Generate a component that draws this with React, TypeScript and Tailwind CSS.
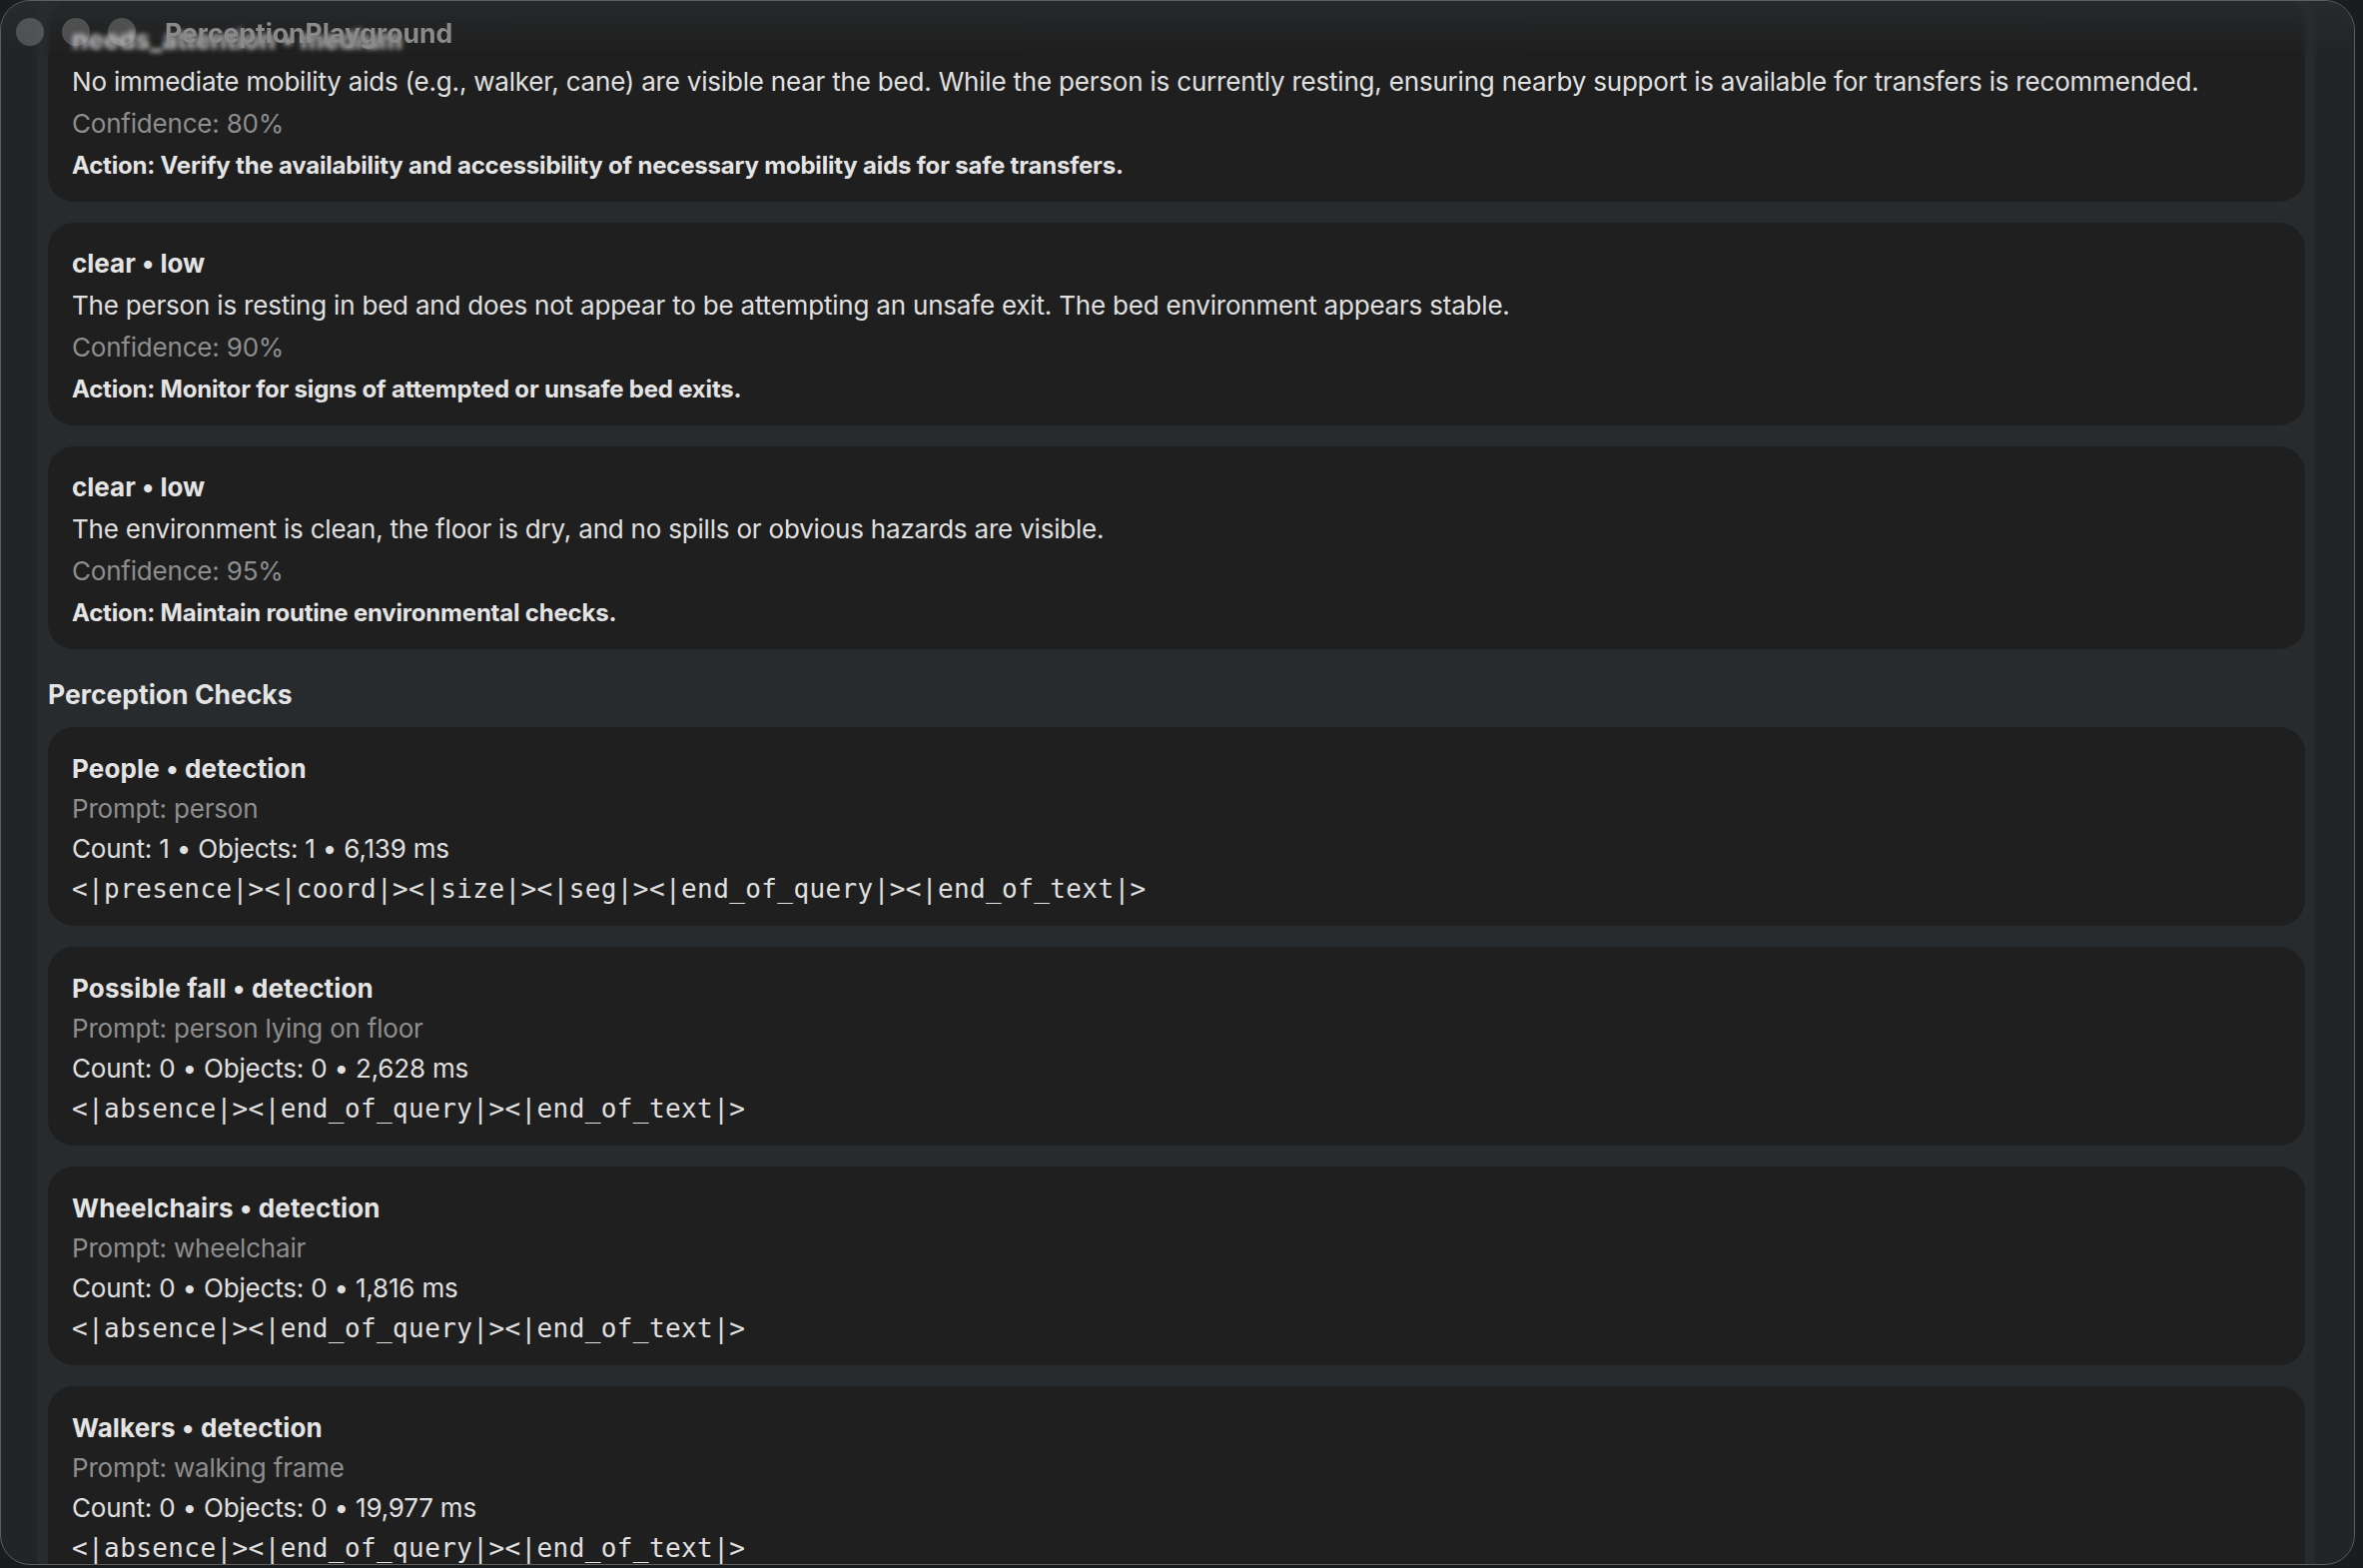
import React from "react";

type Finding = {
  title: string;
  detail: string;
  confidence: string;
  action: string;
};

type Check = {
  title: string;
  prompt: string;
  stats: string;
  tokens: string;
};

const findings: Finding[] = [
  {
    title: "needs_attention • medium",
    detail:
      "No immediate mobility aids (e.g., walker, cane) are visible near the bed. While the person is currently resting, ensuring nearby support is available for transfers is recommended.",
    confidence: "Confidence: 80%",
    action: "Action: Verify the availability and accessibility of necessary mobility aids for safe transfers.",
  },
  {
    title: "clear • low",
    detail:
      "The person is resting in bed and does not appear to be attempting an unsafe exit. The bed environment appears stable.",
    confidence: "Confidence: 90%",
    action: "Action: Monitor for signs of attempted or unsafe bed exits.",
  },
  {
    title: "clear • low",
    detail: "The environment is clean, the floor is dry, and no spills or obvious hazards are visible.",
    confidence: "Confidence: 95%",
    action: "Action: Maintain routine environmental checks.",
  },
];

const checks: Check[] = [
  {
    title: "People • detection",
    prompt: "Prompt: person",
    stats: "Count: 1 • Objects: 1 • 6,139 ms",
    tokens: "<|presence|><|coord|><|size|><|seg|><|end_of_query|><|end_of_text|>",
  },
  {
    title: "Possible fall • detection",
    prompt: "Prompt: person lying on floor",
    stats: "Count: 0 • Objects: 0 • 2,628 ms",
    tokens: "<|absence|><|end_of_query|><|end_of_text|>",
  },
  {
    title: "Wheelchairs • detection",
    prompt: "Prompt: wheelchair",
    stats: "Count: 0 • Objects: 0 • 1,816 ms",
    tokens: "<|absence|><|end_of_query|><|end_of_text|>",
  },
  {
    title: "Walkers • detection",
    prompt: "Prompt: walking frame",
    stats: "Count: 0 • Objects: 0 • 19,977 ms",
    tokens: "<|absence|><|end_of_query|><|end_of_text|>",
  },
];

function FindingCard({ f }: { f: Finding }) {
  return (
    <div className="flex flex-col gap-[10px] rounded-[26px] bg-[#1f1f1f] pt-[25px] pb-[20px] px-6">
      <div className="text-[26px] leading-[32px] font-bold tracking-normal text-[#e4e4e4]">{f.title}</div>
      <div className="text-[26px] leading-[32px] text-[#e0e0e0]">{f.detail}</div>
      <div className="text-[26px] leading-[32px] text-[#8e8e8e]">{f.confidence}</div>
      <div className="text-[24px] leading-[32px] font-bold tracking-[-0.2px] text-[#e4e4e4]">{f.action}</div>
    </div>
  );
}

function CheckCard({ c }: { c: Check }) {
  return (
    <div className="flex flex-col gap-2 rounded-[26px] bg-[#1f1f1f] pt-[26px] pb-[21px] px-6">
      <div className="text-[26px] leading-[32px] font-bold tracking-[0.15px] text-[#e4e4e4]">{c.title}</div>
      <div className="text-[26px] leading-[32px] text-[#8e8e8e]">{c.prompt}</div>
      <div className="text-[26px] leading-[32px] tracking-[-0.2px] text-[#e0e0e0]">{c.stats}</div>
      <div className="font-['DejaVu_Sans_Mono',monospace] text-[26px] leading-[32px] tracking-[0.4px] text-[#e0e0e0]">
        {c.tokens}
      </div>
    </div>
  );
}

export default function App() {
  return (
    <div className="relative h-[1570px] w-[2366px] overflow-hidden bg-[#1b1c1e] font-['Inter','Liberation_Sans',sans-serif] tracking-[-0.2px]">
      {/* window */}
      <div className="absolute left-0 top-0 flex h-[1567px] w-[2358px] overflow-hidden rounded-[30px] border border-[#5e5e5e] bg-[#222527]">
        <div className="w-[36px] shrink-0" />
        <main className="flex-1 overflow-hidden bg-[#272b2d] pl-[11px] pr-[10px]">
          <div className="-mt-[2px] flex flex-col gap-[21px]">
            {findings.map((f, i) => (
              <FindingCard key={i} f={f} />
            ))}
          </div>
          <div className="mt-[29px] text-[26.5px] leading-[32px] font-bold tracking-normal text-[#e4e4e4]">
            Perception Checks
          </div>
          <div className="mt-[17px] flex flex-col gap-[21px]">
            {checks.map((c, i) => (
              <CheckCard key={i} c={c} />
            ))}
          </div>
        </main>
        <div className="w-[39px] shrink-0" />

        {/* title bar */}
        <div className="absolute left-0 right-0 top-0 flex h-[56px] items-start bg-gradient-to-b from-[#2a2d2f]/70 to-[#2a2d2f]/0 backdrop-blur-[2.5px]">
          <div className="ml-[15px] mt-[17px] flex gap-[18px]">
            <span className="h-[28px] w-[28px] rounded-full bg-white/20" />
            <span className="h-[28px] w-[28px] rounded-full bg-white/20" />
            <span className="h-[28px] w-[28px] rounded-full bg-white/20" />
          </div>
          <div className="ml-[29px] mt-[15px] text-[26.5px] leading-[34px] font-bold tracking-normal text-[#8a8a8a]">
            PerceptionPlayground
          </div>
        </div>
      </div>
    </div>
  );
}
